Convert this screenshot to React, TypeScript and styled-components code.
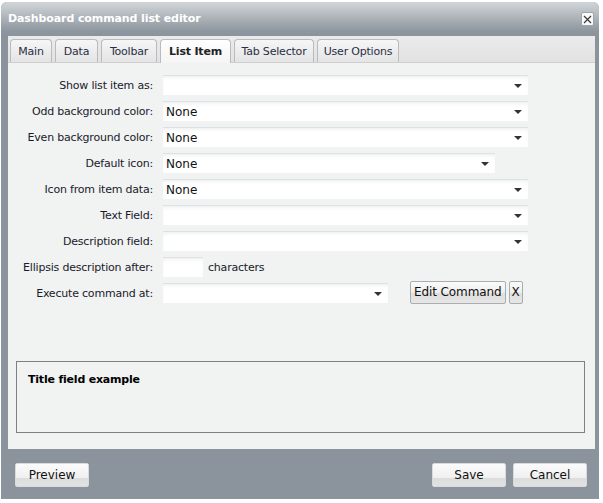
import * as React from 'react';
import styled, { createGlobalStyle } from 'styled-components';

const GlobalStyle = createGlobalStyle`
  html, body {
    margin: 0;
    padding: 0;
    background: #ffffff;
    font-family: "DejaVu Sans", Tahoma, sans-serif;
  }
`;

const tabs = [
  { name: 'Main', width: 42 },
  { name: 'Data', width: 43 },
  { name: 'Toolbar', width: 56 },
  { name: 'List Item', width: 71 },
  { name: 'Tab Selector', width: 80 },
  { name: 'User Options', width: 82 },
];

type Row = {
  label: string;
  kind: 'select' | 'number' | 'command';
  value?: string;
  width?: number;
};

const rows: Row[] = [
  { label: 'Show list item as:', kind: 'select', width: 365 },
  { label: 'Odd background color:', kind: 'select', value: 'None', width: 365 },
  { label: 'Even background color:', kind: 'select', value: 'None', width: 365 },
  { label: 'Default icon:', kind: 'select', value: 'None', width: 332 },
  { label: 'Icon from item data:', kind: 'select', value: 'None', width: 365 },
  { label: 'Text Field:', kind: 'select', width: 365 },
  { label: 'Description field:', kind: 'select', width: 365 },
  { label: 'Ellipsis description after:', kind: 'number' },
  { label: 'Execute command at:', kind: 'command', width: 225 },
];

const App: React.FC = () => {
  return (
    <>
      <GlobalStyle />
      <Dialog>
        <TitleBar>
          <Title>Dashboard command list editor</Title>
          <CloseButton>
            <svg width="9" height="9" viewBox="0 0 9 9">
              <path d="M1 1 L8 8 M8 1 L1 8" stroke="#333" strokeWidth="1.1" />
            </svg>
          </CloseButton>
        </TitleBar>

        <Panel>
          <TabStrip>
            {tabs.map((t) => (
              <Tab key={t.name} $width={t.width} $active={t.name === 'List Item'}>
                {t.name}
              </Tab>
            ))}
          </TabStrip>

          <Content>
            <Form>
              {rows.map((r) => (
                <React.Fragment key={r.label}>
                  <Label>{r.label}</Label>
                  <Field>
                    {r.kind === 'number' ? (
                      <>
                        <Input $width={40} />
                        <Suffix>characters</Suffix>
                      </>
                    ) : (
                      <Select $width={r.width || 365}>
                        <span>{r.value}</span>
                        <Arrow />
                      </Select>
                    )}
                    {r.kind === 'command' && (
                      <CommandButtons>
                        <SmallButton>Edit Command</SmallButton>
                        <SmallButton $narrow>X</SmallButton>
                      </CommandButtons>
                    )}
                  </Field>
                </React.Fragment>
              ))}
            </Form>

            <PreviewBox>
              <PreviewTitle>Title field example</PreviewTitle>
            </PreviewBox>
          </Content>
        </Panel>

        <Footer>
          <DialogButton>Preview</DialogButton>
          <FooterRight>
            <DialogButton>Save</DialogButton>
            <DialogButton>Cancel</DialogButton>
          </FooterRight>
        </Footer>
      </Dialog>
    </>
  );
};

const Dialog = styled.div`
  margin: 2px 0 0 1px;
  width: 598px;
  height: 497px;
  background: #8b949c;
  border-radius: 6px 6px 0 0;
  display: flex;
  flex-direction: column;
  overflow: hidden;
`;

const TitleBar = styled.div`
  height: 34px;
  flex: none;
  display: flex;
  align-items: center;
  justify-content: space-between;
  padding: 0 5px 0 7px;
  background: linear-gradient(#d2d6d9 0%, #b6bcc1 35%, #8e979f 85%, #8b949c 100%);
`;

const Title = styled.div`
  color: #ffffff;
  font-weight: bold;
  font-size: 11px;
  margin-top: -2px;
  letter-spacing: -0.1px;
`;

const CloseButton = styled.div`
  box-sizing: border-box;
  width: 13px;
  height: 14px;
  background: #fafafa;
  border: 1px solid #9ea5ab;
  border-radius: 2px;
  display: flex;
  align-items: center;
  justify-content: center;
  margin-top: 0px;
`;

const Panel = styled.div`
  margin: 0 4px 0 7px;
  height: 413px;
  flex: none;
  background: #f1f2f2;
  display: flex;
  flex-direction: column;
`;

const TabStrip = styled.div`
  height: 26px;
  flex: none;
  display: flex;
  align-items: flex-end;
  gap: 3px;
  padding-left: 2px;
  background: linear-gradient(#ebebeb, #e2e2e2);
  border-bottom: 1px solid #cdcfd1;
`;

const Tab = styled.div<{ $active?: boolean; $width: number }>`
  width: ${(p) => p.$width}px;
  height: ${(p) => (p.$active ? '24px' : '23px')};
  box-sizing: border-box;
  display: flex;
  align-items: center;
  justify-content: center;
  white-space: nowrap;
  font-size: 11px;
  letter-spacing: -0.2px;
  color: ${(p) => (p.$active ? '#222' : '#2a2f45')};
  font-weight: ${(p) => (p.$active ? 'bold' : 'normal')};
  border: 1px solid #b8bcbf;
  border-bottom: none;
  border-radius: 4px 4px 0 0;
  margin-bottom: ${(p) => (p.$active ? '-1px' : '0')};
  background: ${(p) =>
    p.$active ? 'linear-gradient(#ffffff, #f4f4f4)' : 'linear-gradient(#f6f6f6, #e4e4e4)'};
`;

const Content = styled.div`
  flex: 1;
  padding: 12px 10px 0 8px;
  display: flex;
  flex-direction: column;
`;

const Form = styled.div`
  display: grid;
  grid-template-columns: 137px auto;
  column-gap: 10px;
  row-gap: 6px;
  grid-auto-rows: 20px;
`;

const Label = styled.div`
  font-size: 11px;
  letter-spacing: -0.2px;
  color: #1a1a2a;
  display: flex;
  align-items: center;
  justify-content: flex-end;
  white-space: nowrap;
`;

const Field = styled.div`
  display: flex;
  align-items: center;
`;

const inputSurface = `
  box-sizing: border-box;
  height: 20px;
  background: #ffffff;
  border-top: 1px solid #dde1e6;
  box-shadow: inset 0 3px 4px -2px rgba(80, 90, 110, 0.12);
`;

const Select = styled.div<{ $width: number }>`
  ${inputSurface}
  width: ${(p) => p.$width}px;
  display: flex;
  align-items: center;
  justify-content: space-between;
  padding: 0 6px 0 3px;
  font-size: 12px;
  color: #111;
`;

const Arrow = styled.span`
  width: 0;
  height: 0;
  border-left: 4px solid transparent;
  border-right: 4px solid transparent;
  border-top: 4px solid #333;
`;

const Input = styled.div<{ $width: number }>`
  ${inputSurface}
  width: ${(p) => p.$width}px;
`;

const Suffix = styled.span`
  font-size: 11px;
  letter-spacing: -0.2px;
  color: #1a1a2a;
  margin-left: 5px;
`;

const CommandButtons = styled.div`
  display: flex;
  gap: 3px;
  margin-left: 22px;
  margin-top: -2px;
`;

const SmallButton = styled.div<{ $narrow?: boolean }>`
  box-sizing: border-box;
  height: 23px;
  padding: ${(p) => (p.$narrow ? '0 2px' : '0 3px')};
  display: flex;
  align-items: center;
  font-size: 12px;
  letter-spacing: -0.1px;
  color: #111;
  border: 1px solid #a9adb0;
  border-radius: 2px;
  background: linear-gradient(#fbfbfb 0%, #eeeeee 50%, #dedede 51%, #e6e6e6 100%);
`;

const PreviewBox = styled.div`
  margin: 58px 0 0 0;
  height: 72px;
  box-sizing: border-box;
  border: 1px solid #808080;
  padding: 11px 11px;
`;

const PreviewTitle = styled.div`
  font-size: 11px;
  font-weight: bold;
  letter-spacing: -0.2px;
  color: #000;
`;

const Footer = styled.div`
  flex: 1;
  display: flex;
  justify-content: space-between;
  align-items: flex-start;
  padding: 14px 12px 0 14px;
`;

const FooterRight = styled.div`
  display: flex;
  gap: 7px;
`;

const DialogButton = styled.div`
  box-sizing: border-box;
  width: 74px;
  height: 24px;
  display: flex;
  align-items: center;
  justify-content: center;
  font-size: 12px;
  color: #111;
  border: 1px solid #d8dadc;
  border-radius: 2px;
  background: linear-gradient(#fbfbfb 0%, #f0f0f0 62%, #dcdcdc 63%, #e2e2e2 100%);
`;

export default App;
